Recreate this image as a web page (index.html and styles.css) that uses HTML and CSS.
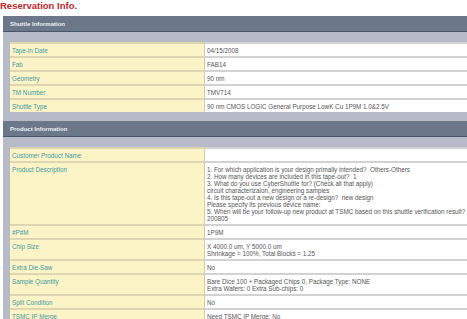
FILE: index.html
```html
<!DOCTYPE html>
<html>
<head>
<meta charset="utf-8">
<link rel="stylesheet" href="styles.css">
</head>
<body>
<h1 class="title">Reservation Info.</h1>
<div class="panel">
  <div class="section-head">Shuttle Information</div>
  <div class="section-body first">
    <table class="info">
      <colgroup><col class="c-lbl"><col class="c-val"></colgroup>
      <tr><td class="lbl">Tape-in Date</td><td class="val">04/15/2008</td></tr>
      <tr><td class="lbl">Fab</td><td class="val">FAB14</td></tr>
      <tr><td class="lbl">Geometry</td><td class="val">90 nm</td></tr>
      <tr><td class="lbl">TM Number</td><td class="val">TMV714</td></tr>
      <tr><td class="lbl">Shuttle Type</td><td class="val">90 nm CMOS LOGIC General Purpose LowK Cu 1P9M 1.0&amp;2.5V</td></tr>
    </table>
  </div>
  <div class="section-head">Product Information</div>
  <div class="section-body">
    <table class="info">
      <colgroup><col class="c-lbl"><col class="c-val"></colgroup>
      <tr><td class="lbl">Customer Product Name</td><td class="val"></td></tr>
      <tr><td class="lbl">Product Description</td><td class="val">1. For which application is your design primally intended?&nbsp; Others-Others<br>2. How many devices are included in this tape-out?&nbsp; 1<br>3. What do you use CyberShuttle for? (Check all that apply)<br>circuit characterizaion, engineering samples<br>4. Is this tape-out a new design or a re-design?&nbsp; new design<br>Please specify its previous device name:<br>5. When will be your follow-up new product at TSMC based on this shuttle verification result?<br>200805</td></tr>
      <tr><td class="lbl">#P#M</td><td class="val">1P9M</td></tr>
      <tr><td class="lbl">Chip Size</td><td class="val">X 4000.0 um, Y 5000.0 um<br>Shrinkage = 100%, Total Blocks = 1.25</td></tr>
      <tr><td class="lbl">Extra Die-Saw</td><td class="val">No</td></tr>
      <tr><td class="lbl">Sample Quantity</td><td class="val">Bare Dice 100 + Packaged Chips 0, Package Type: NONE<br>Extra Wafers: 0 Extra Sub-chips: 0</td></tr>
      <tr><td class="lbl">Split Condition</td><td class="val">No</td></tr>
      <tr><td class="lbl">TSMC IP Merge</td><td class="val">Need TSMC IP Merge: No</td></tr>
    </table>
  </div>
</div>
</body>
</html>
```
FILE: styles.css
```css
html, body {
  margin: 0;
  padding: 0;
  background: #ffffff;
  overflow: hidden;
}
body {
  font-family: "Liberation Sans", Arial, sans-serif;
}
.title {
  margin: 0;
  padding: 0;
  height: 16px;
  font-size: 9.5px;
  line-height: 11px;
  font-weight: bold;
  color: #c0262c;
}
.panel {
  margin-left: 3px;
  width: 480px;
  background: #b7bbc7;
}
.section-head {
  height: 15px;
  line-height: 16px;
  background: #6b7889;
  border-bottom: 1px solid #48546a;
  color: #eef0f3;
  font-size: 6px;
  font-weight: bold;
  padding-left: 7px;
}
.section-body {
  padding: 10px 0 10px 7px;
}
.section-body.first {
  padding-bottom: 9px;
}
.info {
  width: 473px;
  table-layout: fixed;
  border-collapse: separate;
  border-spacing: 0;
  font-size: 6.3px;
  line-height: 7px;
}
.c-lbl {
  width: 195px;
}
.info td {
  vertical-align: top;
  padding: 2.5px 2px 2.5px 2px;
}
.lbl {
  background: #fcf4c6;
  color: #3f9aa3;
  border-top: 2px solid #ddd6b0;
  border-right: 1px solid #cfcab0;
}
.val {
  background: #ffffff;
  color: #555555;
  border-top: 2px solid #d2d2d2;
  white-space: nowrap;
  overflow: hidden;
}
```
